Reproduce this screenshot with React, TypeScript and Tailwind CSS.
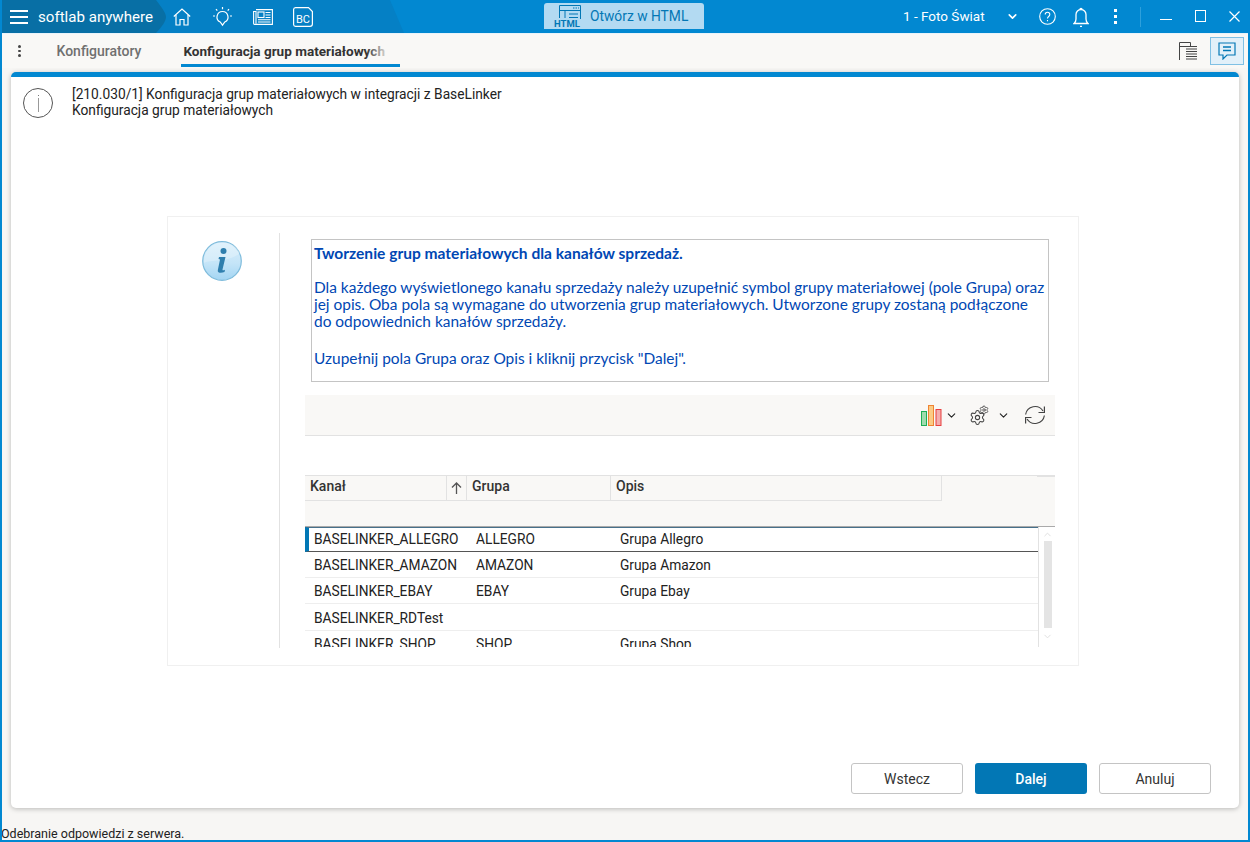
import { ChevronDown, Settings } from "lucide-react"

const rows = [
  { kanal: "BASELINKER_ALLEGRO", grupa: "ALLEGRO", opis: "Grupa Allegro" },
  { kanal: "BASELINKER_AMAZON", grupa: "AMAZON", opis: "Grupa Amazon" },
  { kanal: "BASELINKER_EBAY", grupa: "EBAY", opis: "Grupa Ebay" },
  { kanal: "BASELINKER_RDTest", grupa: "", opis: "" },
  { kanal: "BASELINKER_SHOP", grupa: "SHOP", opis: "Grupa Shop" },
]

function HomeIcon() {
  return (
    <svg className="ml-[8px] shrink-0" width="18" height="18" viewBox="0 0 18 18" fill="none" stroke="white" strokeWidth="1.2">
      <path d="M.8 8.500 9 1l8.200 7.500" />
      <path d="M3 7v10h4v-5.500h4V17h4V7" />
    </svg>
  )
}

function BulbIcon() {
  return (
    <svg className="ml-[22px] shrink-0" width="19" height="20" viewBox="0 0 19 20" fill="none" stroke="white" strokeWidth="1.2">
      <path d="M9.500 0v2.200M3 2.200l1.300 1.500M16 2.200l-1.300 1.500M0 9h2M17 9h2" />
      <path d="M9.500 4.500a5.500 5.500 0 0 0-2.300 10.500l2.300 3.200 2.300-3.200A5.500 5.500 0 0 0 9.500 4.500Z" />
    </svg>
  )
}

function NewsIcon() {
  return (
    <svg className="ml-[21px] shrink-0" width="20" height="16" viewBox="0 0 20 16" fill="none" stroke="white" strokeWidth="1.1">
      <path d="M3 .6h16.400v14.800H1.500A1 1 0 0 1 .6 14.400V2.500H3v12" />
      <rect x="5" y="3" width="6" height="5.500" />
      <path d="M12.500 3.500h5M12.500 6h5M12.500 8.500h5M5 10.800h12.500M5 13h12.500" />
    </svg>
  )
}

function BcIcon() {
  return (
    <div className="relative ml-[20px] flex h-[20px] w-[20px] shrink-0 items-end justify-center pb-[2px] text-[11px] leading-[11px] text-white">
      <svg className="absolute top-0 left-0" width="20" height="20" viewBox="0 0 20 20" fill="none" stroke="white" strokeWidth="1.2">
        <path d="M2.500.6h13l3.900 3.900V17a2.400 2.400 0 0 1-2.400 2.400H2.500A2 2 0 0 1 .6 17.500v-15A2 2 0 0 1 2.500.6Z" />
      </svg>
      <span className="relative">BC</span>
    </div>
  )
}

function HtmlIcon() {
  return (
    <div className="relative h-[22px] w-[28px] shrink-0">
      <svg className="absolute top-0 left-[5px]" width="22" height="19" viewBox="0 0 22 19" fill="none" stroke="#0277b5" strokeWidth="1">
        <path d="M.5 13V.5h21v17h-1M.5 5.500h21M6 5.500V13M10 9h9M10 12.500h9" />
        <path d="M14 3h1.500M16.500 3h1.500M19 3h1" />
      </svg>
      <span className="absolute bottom-[-2px] left-0 bg-[#b3daf2] pr-[1px] text-[9.500px] leading-[10px] font-bold text-[#0277b5]">HTML</span>
    </div>
  )
}

function BarsIcon() {
  return (
    <svg className="shrink-0" width="21" height="21" viewBox="0 0 21 21">
      <rect x=".5" y="6.500" width="5" height="14" fill="#9fdbae" stroke="#1fae55" strokeWidth="1" />
      <rect x="7.500" y=".5" width="5" height="20" fill="#fbcb85" stroke="#ef8432" strokeWidth="1" />
      <rect x="15" y="4.500" width="5" height="16" fill="#f4adad" stroke="#e83f3f" strokeWidth="1" />
    </svg>
  )
}

function GearsIcon() {
  return (
    <div className="relative ml-[11px] h-[21px] w-[20px] shrink-0 text-[#444]">
      <Settings className="absolute bottom-0 left-0" size={17} strokeWidth={1.500} />
      <Settings className="absolute top-0 right-0" size={10} strokeWidth={2} />
    </div>
  )
}

function RefreshIcon() {
  return (
    <svg className="ml-[14px] shrink-0" width="22" height="22" viewBox="-1 -1 22 22" fill="none" stroke="#444" strokeWidth="1.200">
      <path d="M.6 9.500A9.500 9.500 0 0 1 18 6" />
      <path d="M19.400 1.500V7.500H13.500" />
      <path d="M19.400 10.500A9.500 9.500 0 0 1 2 14" />
      <path d="M.6 18.500V12.500H6.500" />
    </svg>
  )
}

function InfoBall() {
  return (
    <svg width="40" height="40" viewBox="0 0 40 40">
      <defs>
        <linearGradient id="ball" x1="0" y1="0" x2="0" y2="1">
          <stop offset="0" stopColor="#d8eefb" />
          <stop offset="0.55" stopColor="#c5e5f8" />
          <stop offset="1" stopColor="#a3d5f3" />
        </linearGradient>
      </defs>
      <circle cx="20" cy="20" r="19.300" fill="url(#ball)" stroke="#7fbcdc" strokeWidth="1.200" />
      <path d="M2 22C10 18 26 22 38 12A19 19 0 0 0 2 22Z" fill="#ffffff" opacity="0.25" />
      <circle cx="21.500" cy="10" r="3" fill="#2f7fae" />
      <path d="M17 16h6.500l-3 12.500c-.2 1 .6 1.200 2.500.2l-.5 2.300c-3 1.300-7.200 1.300-6.700-1.800L18 18.500 16.500 18Z" fill="#2f7fae" />
    </svg>
  )
}

export default function App() {
  return (
    <div className="flex h-[842px] w-[1250px] flex-col overflow-hidden border-x-2 border-b-2 border-[#0288d1] bg-[#f7f6f4] font-['Roboto',sans-serif]">
      {/* title bar */}
      <div className="relative -mx-[2px] flex h-[33px] shrink-0 items-center bg-[#0288d1] text-white">
        <svg className="absolute top-0 left-0" width="440" height="33" viewBox="0 0 440 33">
          <path d="M150 0h240l14 33H120Z" fill="#0580c5" />
          <path d="M0 0h156c6 8 10 13 10 17s-4 10-10 16H0Z" fill="#086fa5" />
        </svg>
        <div className="relative flex w-[165px] shrink-0 items-center pt-[1px] pl-[10px]">
          <div className="flex w-[18px] flex-col gap-[4.500px]">
            <div className="h-[1.500px] bg-white" />
            <div className="h-[1.500px] bg-white" />
            <div className="h-[1.500px] bg-white" />
          </div>
          <span className="ml-[10px] text-[15.100px] whitespace-nowrap">softlab anywhere</span>
        </div>
        <div className="relative flex items-center">
          <HomeIcon />
          <BulbIcon />
          <NewsIcon />
          <BcIcon />
        </div>
        <div className="relative mt-[3px] ml-[231px] flex h-[26px] w-[160px] shrink-0 items-center gap-[8px] self-start rounded-t-[3px] bg-[#b3daf2] pl-[10px] text-[13.800px] text-[#0277b5]">
          <HtmlIcon />
          <span className="whitespace-nowrap">Otwórz w HTML</span>
        </div>
        <span className="relative ml-[199px] w-[83px] shrink-0 text-[13.500px] whitespace-nowrap">1 - Foto Świat</span>
        <ChevronDown className="relative ml-[20px] shrink-0" size={13} strokeWidth={3} />
        <svg className="relative ml-[20px] shrink-0" width="17" height="17" viewBox="0 0 17 17" fill="none" stroke="white" strokeWidth="1.100">
          <circle cx="8.500" cy="8.500" r="7.800" />
          <path d="M6.200 6.500c0-3 4.600-3 4.600 0 0 2-2.300 2-2.300 4M8.500 12v1.300" />
        </svg>
        <svg className="relative ml-[17px] shrink-0" width="16" height="20" viewBox="0 0 16 20" fill="none" stroke="white" strokeWidth="1.300">
          <path d="M1 16.500h14c-1.500-1-2-2.500-2-4.500V7.500a5 5 0 0 0-10 0V12c0 2-.5 3.500-2 4.500ZM7 2.300a1 1 0 0 1 2 0M7 19.300h2" />
        </svg>
        <div className="relative ml-[25px] flex shrink-0 flex-col gap-[3px]">
          <div className="h-[3px] w-[3px] bg-white" />
          <div className="h-[3px] w-[3px] bg-white" />
          <div className="h-[3px] w-[3px] bg-white" />
        </div>
        <div className="relative ml-[23px] h-[20px] w-[1px] shrink-0 bg-[#2ea0dc]" />
        <div className="relative mt-[6px] ml-[19px] h-[1.500px] w-[12px] shrink-0 bg-white" />
        <div className="relative mb-[2px] ml-[23px] h-[12px] w-[11px] shrink-0 border-[1.200px] border-white" />
        <svg className="relative ml-[23px] shrink-0" width="11" height="11" viewBox="0 0 11 11" stroke="white" strokeWidth="1.200">
          <path d="M.5.500 10.500 10.500M10.500.500.5 10.500" />
        </svg>
      </div>

      {/* tab bar */}
      <div className="flex h-[35px] shrink-0 items-center border-t border-[#e8f3fa] bg-[#f9f8f6]">
        <div className="ml-[16px] flex flex-col gap-[2px]">
          <div className="h-[2.500px] w-[2.500px] rounded-full bg-[#444]" />
          <div className="h-[2.500px] w-[2.500px] rounded-full bg-[#444]" />
          <div className="h-[2.500px] w-[2.500px] rounded-full bg-[#444]" />
        </div>
        <span className="ml-[36px] text-[14px] font-medium whitespace-nowrap text-[#707070]">Konfiguratory</span>
        <div className="relative ml-[40px] flex h-[33px] w-[219px] items-center self-start border-b-[3px] border-[#0288d1] pt-[3px] pl-[2px]">
          <div className="relative w-[207px]">
            <span className="text-[13.550px] font-bold whitespace-nowrap text-[#333]">Konfiguracja grup materiałowych</span>
            <div className="absolute top-0 right-0 h-full w-[24px] bg-gradient-to-r from-transparent to-[#f9f8f6]" />
          </div>
        </div>
        <svg className="ml-auto shrink-0" width="18" height="18" viewBox="0 0 18 18" fill="none" stroke="#444" strokeWidth="1">
          <path d="M.5 18V.5h11v4H.5M4 4.500h14M7 7h11M7 9.500h11M7 12h11M7 14.500h11M7 17h11" />
        </svg>
        <div className="mr-[4px] ml-[13px] flex h-[28px] w-[34px] items-center justify-center border border-[#7fc0e4] bg-[#e2f0f9]">
          <svg width="18" height="18" viewBox="0 0 18 18" fill="none" stroke="#0277b5" strokeWidth="1.200">
            <path d="M1 1h16v12H9l-4 4v-4H1Z" />
            <path d="M5 5h8M5 8.500h8" strokeWidth="1.600" />
          </svg>
        </div>
      </div>

      {/* content card */}
      <div className="mx-[9px] mt-[4px] flex min-h-0 flex-1 flex-col rounded-[5px] border-t-[5px] border-[#0288d1] bg-white shadow-[0_1px_5px_rgba(0,0,0,0.25)]">
        <div className="flex h-[41px] shrink-0 items-start pt-[11px] pl-[12px]">
          <div className="flex h-[30px] w-[30px] shrink-0 flex-col items-center justify-center gap-[2px] rounded-full border border-[#555]">
            <div className="h-[1px] w-[1px] bg-[#777]" />
            <div className="h-[14px] w-[1px] bg-[#999]" />
          </div>
          <div className="-mt-[2px] ml-[19px] text-[13.750px] leading-[16px] text-[#222]">
            <div>[210.030/1] Konfiguracja grup materiałowych w integracji z BaseLinker</div>
            <div>Konfiguracja grup materiałowych</div>
          </div>
        </div>

        {/* wizard panel */}
        <div className="mt-[98px] ml-[156px] flex h-[450px] w-[912px] shrink-0 border border-[#f0f0f0] pt-[16px]">
          <div className="flex h-[415px] w-[112px] shrink-0 justify-center border-r border-[#e2e2e2] pt-[8px] pr-[2px]">
            <div className="ml-[-2px]"><InfoBall /></div>
          </div>
          <div className="flex min-w-0 flex-1 flex-col pl-[25px]">
            <div className="mt-[6px] ml-[6px] h-[143px] w-[738px] shrink-0 border border-[#c4c4c4] pt-[5px] pl-[2px] font-['Lato',sans-serif] text-[15.450px] leading-[17px] text-[#0047b3]">
              <div className="text-[15.550px] font-bold">Tworzenie grup materiałowych dla kanałów sprzedaż.</div>
              <div className="mt-[17px] whitespace-nowrap">
                Dla każdego wyświetlonego kanału sprzedaży należy uzupełnić symbol grupy materiałowej (pole Grupa) oraz<br />
                jej opis. Oba pola są wymagane do utworzenia grup materiałowych. Utworzone grupy zostaną podłączone<br />
                do odpowiednich kanałów sprzedaży.
              </div>
              <div className="mt-[20px]">Uzupełnij pola Grupa oraz Opis i kliknij przycisk "Dalej".</div>
            </div>

            {/* toolbar */}
            <div className="mt-[13px] flex h-[41px] w-[750px] shrink-0 items-center justify-end border-b border-[#e2e2e2] bg-[#f9f8f6] pr-[9px] text-[#222]">
              <BarsIcon />
              <ChevronDown size={13} strokeWidth={2} className="ml-[3px] shrink-0" />
              <GearsIcon />
              <ChevronDown size={13} strokeWidth={2} className="ml-[8px] shrink-0" />
              <RefreshIcon />
            </div>

            {/* grid */}
            <div className="relative mt-[39px] flex h-[51px] w-[750px] shrink-0 flex-col border-t border-[#e2e2e2] bg-[#f9f8f6] text-[14px] font-medium text-[#333]">
              <div className="absolute top-0 right-0 h-[1px] w-[18px] bg-[#e2e2e2]" />
              <div className="flex h-[25px] w-[637px] shrink-0 border-r border-b border-[#e2e2e2]">
                <div className="flex w-[141px] items-center pb-[3px] pl-[5px]">Kanał</div>
                <div className="flex w-[21px] items-center justify-center border-x border-[#e2e2e2]">
                  <svg width="11" height="12" viewBox="0 0 11 12" fill="none" stroke="#555" strokeWidth="1.300">
                    <path d="M5.500 12V1M1 5.500 5.500 1l4.500 4.500" />
                  </svg>
                </div>
                <div className="flex w-[144px] items-center border-r border-[#e2e2e2] pb-[3px] pl-[5px]">Grupa</div>
                <div className="flex items-center pb-[3px] pl-[5px]">Opis</div>
              </div>
            </div>
            <div className="flex h-[121px] w-[750px] shrink-0 overflow-hidden border-t border-[#aaa] text-[13.750px] text-[#222]">
              <div className="h-full w-[734px] shrink-0 overflow-hidden border-r border-[#e2e2e2]">
                {rows.map((row, i) => (
                  <div
                    key={row.kanal}
                    className={
                      i === 0
                        ? "flex h-[25px] items-center border-t border-b border-t-[#47708a] border-b-[#555] border-l-[4px] border-l-[#0277b5] pl-[5px]"
                        : i === 3
                          ? "flex h-[27px] shrink-0 items-center border-b border-[#eeeeee] pt-[2px] pl-[9px]"
                          : "flex h-[26px] shrink-0 items-center border-b border-[#eeeeee] pt-[1px] pl-[9px]"
                    }
                  >
                    <div className="w-[162px] shrink-0 whitespace-nowrap">{row.kanal}</div>
                    <div className="w-[144px] shrink-0">{row.grupa}</div>
                    <div>{row.opis}</div>
                  </div>
                ))}
              </div>
              <div className="flex w-[16px] flex-col items-center pl-[1px]">
                <ChevronDown size={11} className="mt-[2px] rotate-180 text-[#ddd]" />
                <div className="mt-[1px] h-[87px] w-[8px] bg-[#e4e4e4]" />
                <ChevronDown size={11} className="mt-[3px] text-[#ddd]" />
              </div>
            </div>
          </div>
        </div>

        {/* buttons */}
        <div className="mt-auto mr-[28px] mb-[14px] flex justify-end gap-[12px] text-[14px]">
          <button className="h-[31px] w-[112px] rounded-[3px] border border-[#c4c4c4] bg-white pt-[1px] text-[#333]">Wstecz</button>
          <button className="h-[31px] w-[112px] rounded-[3px] bg-[#0277b5] pt-[1px] font-medium text-white">Dalej</button>
          <button className="h-[31px] w-[112px] rounded-[3px] border border-[#c4c4c4] bg-white pt-[1px] text-[#333]">Anuluj</button>
        </div>
      </div>

      {/* status bar */}
      <div className="flex h-[32px] shrink-0 items-end text-[12.500px] leading-[15px] text-[#222]">
        <span className="-ml-[1px] -mb-[1px]">Odebranie odpowiedzi z serwera.</span>
      </div>
    </div>
  )
}
